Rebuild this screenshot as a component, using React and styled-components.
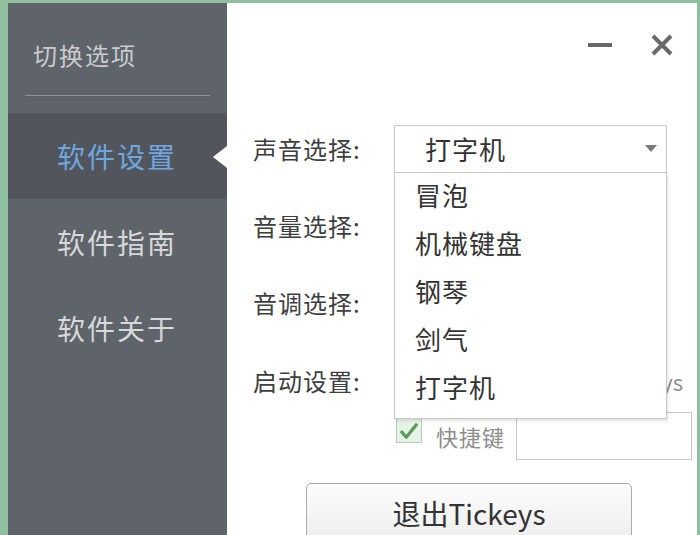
import React from "react";
import styled, { createGlobalStyle } from "styled-components";

const Global = createGlobalStyle`
  html, body { margin: 0; padding: 0; overflow: hidden; }
  body { font-family: "Noto Sans CJK SC", "Noto Sans", sans-serif; }
  * { box-sizing: border-box; }
`;

const Frame = styled.div`
  width: 700px;
  height: 535px;
  background: #8fbf9f;
  padding: 3px 3px 0 8px;
  display: flex;
  overflow: hidden;
`;

const Sidebar = styled.nav`
  width: 219px;
  flex: none;
  background: #5f636a;
  display: flex;
  flex-direction: column;
`;

const SideHeader = styled.div`
  padding: 0 17px;
`;

const SideTitle = styled.div`
  height: 92px;
  padding: 10px 0 0 8px;
  display: flex;
  align-items: center;
  font-size: 24px;
  letter-spacing: 2px;
  color: #c9cbce;
`;

const Divider = styled.div`
  height: 2px;
  border-top: 1px solid #8e9197;
  border-bottom: 1px solid #575b61;
`;

const NavList = styled.ul`
  list-style: none;
  margin: 16px 0 0;
  padding: 0;
`;

const NavItem = styled.li`
  position: relative;
  height: 86px;
  display: flex;
  align-items: center;
  padding-left: 49px;
  font-size: 28px;
  letter-spacing: 2px;
  color: ${(p) => (p.$active ? "#6ea7e0" : "#d6d8db")};
  background: ${(p) => (p.$active ? "#52565c" : "transparent")};
`;

const ActiveArrow = styled.span`
  position: absolute;
  right: 0;
  top: 50%;
  margin-top: -10px;
  width: 0;
  height: 0;
  border-top: 11px solid transparent;
  border-bottom: 11px solid transparent;
  border-right: 14px solid #ffffff;
`;

const Main = styled.main`
  flex: 1;
  background: #ffffff;
  position: relative;
  overflow: hidden;
  color: #3a3a3a;
`;

const TitleBar = styled.div`
  height: 107px;
  display: flex;
  justify-content: flex-end;
  align-items: flex-start;
  padding: 31px 24px 0 0;
  gap: 39px;
`;

const WinButton = styled.button`
  width: ${(p) => p.$w}px;
  height: 22px;
  padding: 0;
  border: 0;
  background: none;
  display: flex;
  align-items: center;
  justify-content: center;
`;

const MinBar = styled.span`
  display: block;
  width: 24px;
  height: 4px;
  background: #6a6a6a;
`;

const Form = styled.div`
  display: grid;
  grid-template-columns: 141px 1fr;
  grid-template-rows: 77px 77px 77px 71px 48px;
  padding: 0 5px 0 26px;
`;

const Label = styled.div`
  display: flex;
  align-items: center;
  font-size: 24px;
  letter-spacing: 1px;
  color: #3e3e3e;
  padding-top: ${(p) => p.$offset || 0}px;
`;

const Cell = styled.div`
  display: flex;
  align-items: center;
  padding-top: ${(p) => p.$offset || 0}px;
`;

const Select = styled.div`
  width: 273px;
  height: 48px;
  border: 1px solid #c9c9c9;
  display: flex;
  align-items: center;
  justify-content: space-between;
  padding: 0 9px 0 30px;
  font-size: 26px;
  letter-spacing: 1px;
  color: #333;
`;

const Caret = styled.span`
  width: 0;
  height: 0;
  border-left: 6px solid transparent;
  border-right: 6px solid transparent;
  border-top: 7px solid #7a7a7a;
`;

const Track = styled.div`
  width: 250px;
  height: 4px;
  background: #dcdcdc;
`;

const Check = styled.span`
  width: 26px;
  height: 25px;
  flex: none;
  border: 1px solid #b4ccb4;
  background: #e8f3e8;
  display: flex;
  align-items: center;
  justify-content: center;
  margin-left: 2px;
  align-self: ${(p) => (p.$top ? "flex-start" : "center")};
  margin-top: ${(p) => (p.$top ? 6 : 0)}px;
`;

const CheckText = styled.span`
  font-size: 22px;
  letter-spacing: 1px;
  color: #8e8e8e;
  margin-left: 14px;
`;

const TailText = styled(CheckText)`
  margin-left: auto;
  padding-right: 9px;
  letter-spacing: 0;
`;

const KeyInput = styled.div`
  flex: 1;
  height: 48px;
  margin-left: 11px;
  border: 1px solid #c9c9c9;
  background: #fff;
`;

const ButtonRow = styled.div`
  padding: 23px 0 0 79px;
`;

const ExitButton = styled.button`
  width: 326px;
  height: 64px;
  border: 1px solid #a9abad;
  border-radius: 5px;
  background: linear-gradient(#fdfdfd, #ececec);
  font-family: "Noto Sans CJK SC", "Noto Sans", sans-serif;
  font-size: 28px;
  color: #333;
  display: flex;
  justify-content: center;
  align-items: center;
  padding: 0 0 4px;
`;

const Dropdown = styled.ul`
  position: absolute;
  left: 167px;
  top: 169px;
  width: 273px;
  margin: 0;
  padding: 0 0 5px;
  list-style: none;
  background: #fff;
  border: 1px solid #c9c9c9;
  box-shadow: 1px 2px 3px rgba(0, 0, 0, 0.12);
`;

const Option = styled.li`
  height: 48px;
  display: flex;
  align-items: center;
  padding: 0 0 6px 20px;
  font-size: 26px;
  letter-spacing: 1px;
  color: #333;
`;

const CheckMark = () => (
  <svg width="20" height="18" viewBox="0 0 22 20">
    <path d="M2 10 L8 17 L20 2" fill="none" stroke="#5a9a5a" strokeWidth="3.6" strokeLinejoin="round" />
  </svg>
);

const nav = ["软件设置", "软件指南", "软件关于"];
const sounds = ["冒泡", "机械键盘", "钢琴", "剑气", "打字机"];

export default function App() {
  return (
    <>
      <Global />
      <Frame>
        <Sidebar>
          <SideHeader>
            <SideTitle>切换选项</SideTitle>
            <Divider />
          </SideHeader>
          <NavList>
            {nav.map((n, i) => (
              <NavItem key={n} $active={i === 0}>
                {n}
                {i === 0 && <ActiveArrow />}
              </NavItem>
            ))}
          </NavList>
        </Sidebar>
        <Main>
          <TitleBar>
            <WinButton $w={24} aria-label="minimize">
              <MinBar />
            </WinButton>
            <WinButton $w={22} aria-label="close">
              <svg width="22" height="22" viewBox="0 0 22 22">
                <path d="M2 2 L20 20 M20 2 L2 20" stroke="#6a6a6a" strokeWidth="4" />
              </svg>
            </WinButton>
          </TitleBar>
          <Form>
            <Label>声音选择:</Label>
            <Cell>
              <Select>
                打字机
                <Caret />
              </Select>
            </Cell>
            <Label>音量选择:</Label>
            <Cell>
              <Track />
            </Cell>
            <Label>音调选择:</Label>
            <Cell>
              <Track />
            </Cell>
            <Label $offset={8}>启动设置:</Label>
            <Cell $offset={8}>
              <Check>
                <CheckMark />
              </Check>
              <TailText>开机启动Tickeys</TailText>
            </Cell>
            <div />
            <Cell>
              <Check $top>
                <CheckMark />
              </Check>
              <CheckText>快捷键</CheckText>
              <KeyInput />
            </Cell>
          </Form>
          <ButtonRow>
            <ExitButton>退出Tickeys</ExitButton>
          </ButtonRow>
          <Dropdown>
            {sounds.map((s) => (
              <Option key={s}>{s}</Option>
            ))}
          </Dropdown>
        </Main>
      </Frame>
    </>
  );
}
